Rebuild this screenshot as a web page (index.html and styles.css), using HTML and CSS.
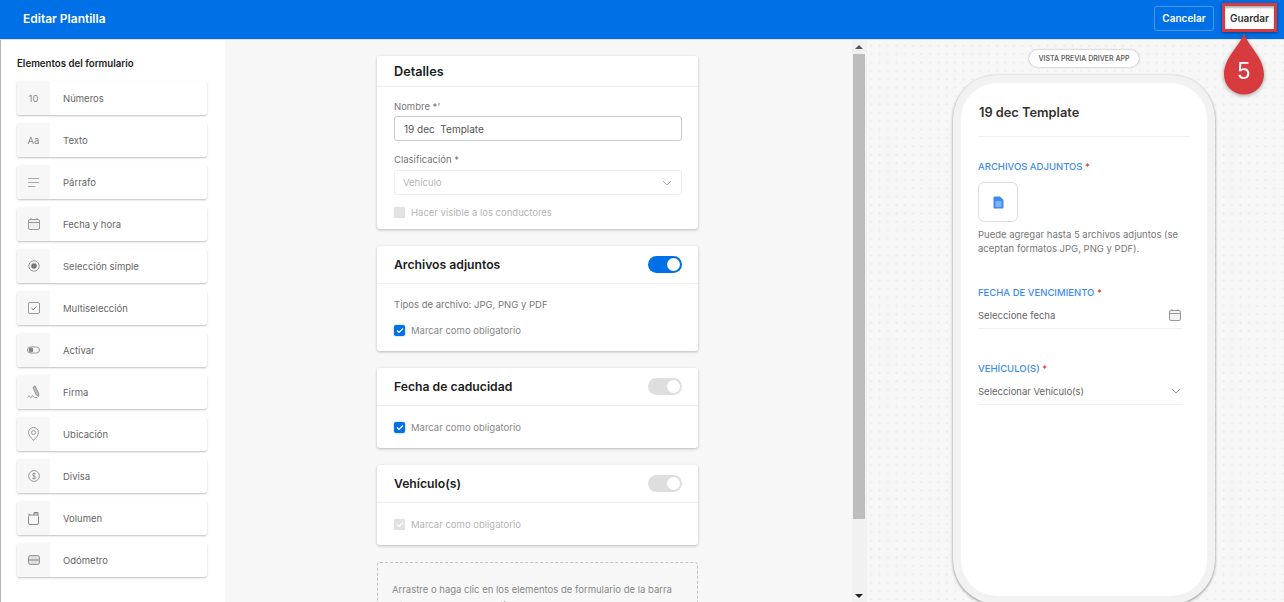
FILE: index.html
```html
<!DOCTYPE html>
<html lang="es">
<head>
	<title>Editar Plantilla</title>
	<meta charset="utf-8">
	<link rel="stylesheet" href="styles.css">
</head>
<body>
	<header class="topbar">
		<div class="topbar-title">Editar Plantilla</div>
		<div class="topbar-actions">
			<button class="btn-cancel">Cancelar</button>
			<button class="btn-save">Guardar</button>
		</div>
	</header>

	<div class="main">
		<aside class="sidebar">
			<div class="sidebar-title">Elementos del formulario</div>

			<div class="element"><div class="element-icon">10</div><div class="element-name">Números</div></div>
			<div class="element"><div class="element-icon">Aa</div><div class="element-name">Texto</div></div>
			<div class="element">
				<div class="element-icon"><svg width="11" height="9" viewBox="0 0 11 9"><path d="M0 .5h11M0 4.500h11M0 8.500h7.500" stroke="#aaa" fill="none"/></svg></div>
				<div class="element-name">Párrafo</div>
			</div>
			<div class="element">
				<div class="element-icon"><svg width="12" height="12" viewBox="0 0 12 12"><rect x="0.5" y="1.5" width="11" height="10" rx="1.5" fill="#eee" stroke="#999"/><path d="M1 4.500h10M3 0v2M9 0v2" stroke="#999" fill="none"/></svg></div>
				<div class="element-name">Fecha y hora</div>
			</div>
			<div class="element">
				<div class="element-icon"><svg width="12" height="12" viewBox="0 0 12 12"><circle cx="6" cy="6" r="5.2" fill="none" stroke="#999"/><circle cx="6" cy="6" r="2.8" fill="#777"/></svg></div>
				<div class="element-name">Selección simple</div>
			</div>
			<div class="element">
				<div class="element-icon"><svg width="12" height="12" viewBox="0 0 12 12"><rect x="0.5" y="0.5" width="11" height="11" rx="1.5" fill="none" stroke="#999"/><path d="M3.500 6.200l1.700 1.600 3.200-3.400" fill="none" stroke="#777"/></svg></div>
				<div class="element-name">Multiselección</div>
			</div>
			<div class="element">
				<div class="element-icon"><svg width="13" height="8" viewBox="0 0 13 8"><rect x="0.5" y="1" width="12" height="6" rx="3" fill="none" stroke="#999"/><circle cx="4" cy="4" r="2.400" fill="#888"/></svg></div>
				<div class="element-name">Activar</div>
			</div>
			<div class="element">
				<div class="element-icon"><svg width="13" height="14" viewBox="0 0 13 14"><path d="M6 2.500L8 .8l3.500 7.200.3 3.500-2.900-2z" fill="#bbb" stroke="#888" stroke-width="0.800"/><path d="M0.500 12.500c1-2 2-2 2.500-.5s1.500 1 2-1 1.500 1 2.500 1.500h3" fill="none" stroke="#999"/></svg></div>
				<div class="element-name">Firma</div>
			</div>
			<div class="element">
				<div class="element-icon"><svg width="11" height="14" viewBox="0 0 11 14"><path d="M5.500.5a5 5 0 0 1 5 5c0 3-3 5.500-5 8-2-2.500-5-5-5-8a5 5 0 0 1 5-5z" fill="none" stroke="#999"/><circle cx="5.500" cy="5.500" r="2" fill="none" stroke="#999"/></svg></div>
				<div class="element-name">Ubicación</div>
			</div>
			<div class="element">
				<div class="element-icon"><svg width="12" height="12" viewBox="0 0 12 12"><circle cx="6" cy="6" r="5.400" fill="none" stroke="#999"/><path d="M7.800 4.200C7.300 3.300 4.400 3 4.400 4.600S7.900 5.900 7.900 7.500 4.600 9 4.100 7.800M6 2.500v7" fill="none" stroke="#888" stroke-width="0.800"/></svg></div>
				<div class="element-name">Divisa</div>
			</div>
			<div class="element">
				<div class="element-icon"><svg width="11" height="13" viewBox="0 0 11 13"><rect x="0.500" y="3" width="10" height="9.500" rx="1.500" fill="none" stroke="#888"/><path d="M1 3V1.500M6 3V.5h4V3" fill="#bbb" stroke="#888"/></svg></div>
				<div class="element-name">Volumen</div>
			</div>
			<div class="element">
				<div class="element-icon"><svg width="12" height="10" viewBox="0 0 12 10"><rect x="0.500" y="0.500" width="11" height="9" rx="2" fill="#d8d8d8" stroke="#999"/><path d="M1 5h10" stroke="#888" fill="none"/><path d="M2 3h8M2 7h8" stroke="#f2f2f2" stroke-dasharray="2 1" fill="none"/></svg></div>
				<div class="element-name">Odómetro</div>
			</div>
		</aside>

		<section class="editor">
			<div class="editor-scroll">
				<div class="card">
					<div class="card-head card-head-details">Detalles</div>
					<div class="card-body details-body">
						<label class="field-label">Nombre *'</label>
						<div class="input input-active">19 dec&nbsp; Template</div>
						<label class="field-label field-label-next">Clasificación *</label>
						<div class="input input-disabled">
							Vehículo
							<svg width="10" height="6" viewBox="0 0 10 6"><path d="M1 1l4 4 4-4" fill="none" stroke="#aaa"/></svg>
						</div>
						<div class="check-row check-row-details"><span class="check check-off"></span><span class="check-text check-text-muted">Hacer visible a los conductores</span></div>
					</div>
				</div>

				<div class="card">
					<div class="card-head">Archivos adjuntos<span class="toggle toggle-on"></span></div>
					<div class="card-body">
						<div class="file-types">Tipos de archivo: JPG, PNG y PDF</div>
						<div class="check-row"><span class="check check-on"><svg width="8" height="7" viewBox="0 0 8 7"><path d="M1 3.500l2 2 4-4" fill="none" stroke="#fff" stroke-width="1.200"/></svg></span><span class="check-text">Marcar como obligatorio</span></div>
					</div>
				</div>

				<div class="card">
					<div class="card-head">Fecha de caducidad<span class="toggle"></span></div>
					<div class="card-body">
						<div class="check-row"><span class="check check-on"><svg width="8" height="7" viewBox="0 0 8 7"><path d="M1 3.500l2 2 4-4" fill="none" stroke="#fff" stroke-width="1.200"/></svg></span><span class="check-text">Marcar como obligatorio</span></div>
					</div>
				</div>

				<div class="card">
					<div class="card-head">Vehículo(s)<span class="toggle"></span></div>
					<div class="card-body">
						<div class="check-row"><span class="check check-off"><svg width="8" height="7" viewBox="0 0 8 7"><path d="M1 3.500l2 2 4-4" fill="none" stroke="#fff" stroke-width="1.200"/></svg></span><span class="check-text check-text-muted">Marcar como obligatorio</span></div>
					</div>
				</div>

				<div class="dropzone">Arrastre o haga clic en los elementos de formulario de la barra lateral para crear la plantilla</div>
			</div>
			<div class="scrollbar">
				<span class="arrow arrow-up"></span>
				<div class="scroll-thumb"></div>
				<span class="arrow arrow-down"></span>
			</div>
		</section>

		<section class="preview">
			<div class="preview-tag">VISTA PREVIA DRIVER APP</div>
			<div class="phone">
				<div class="phone-screen">
					<div class="phone-title">19 dec Template</div>

					<div class="phone-label phone-label-first">ARCHIVOS ADJUNTOS <span class="req">*</span></div>
					<div class="attach-box">
						<svg width="11" height="13" viewBox="0 0 11 13"><path d="M.5 1.500a1 1 0 0 1 1-1h5.500L10.500 4v7.500a1 1 0 0 1-1 1h-8a1 1 0 0 1-1-1z" fill="#3d8bf0"/><path d="M2.500 6h6M2.500 8h6M2.500 10h6" stroke="#cfe2fb" stroke-width="0.900"/></svg>
					</div>
					<div class="attach-help">Puede agregar hasta 5 archivos adjuntos (se aceptan formatos JPG, PNG y PDF).</div>

					<div class="phone-label phone-label-date">FECHA DE VENCIMIENTO <span class="req">*</span></div>
					<div class="phone-input">
						Seleccione fecha
						<svg width="12" height="12" viewBox="0 0 12 12"><rect x="0.500" y="1.500" width="11" height="10" rx="1.500" fill="#f2f2f2" stroke="#999"/><path d="M1 4.500h10M3 0v2M9 0v2" stroke="#999" fill="none"/></svg>
					</div>

					<div class="phone-label phone-label-vehicle">VEHÍCULO(S) <span class="req">*</span></div>
					<div class="phone-input">
						Seleccionar Vehículo(s)
						<svg width="10" height="6" viewBox="0 0 10 6"><path d="M1 1l4 4 4-4" fill="none" stroke="#999"/></svg>
					</div>
				</div>
			</div>
		</section>
	</div>

	<!-- callout on top of the screenshot -->
	<div class="callout-box"></div>
	<div class="callout-pin">
		<svg width="44" height="64" viewBox="0 0 44 64"><path d="M22 0C25 12 42 24 42 41.500A20 20 0 0 1 2 41.500C2 24 19 12 22 0z" fill="#d83b3e"/></svg>
		<span class="callout-num">5</span>
	</div>
</body>
</html>
```

FILE: styles.css
```css
* {
	box-sizing: border-box;
}

html, body {
	margin: 0;
	height: 100%;
	overflow: hidden;
	font-family: "Inter", "Liberation Sans", sans-serif;
	color: #1c1c1c;
	background-color: #f7f7f7;
}

body {
	display: flex;
	flex-direction: column;
}

.topbar {
	display: flex;
	flex: none;
	align-items: center;
	justify-content: space-between;
	height: 40px;
	padding: 0 7px 3px 23px;
	background-color: #0070e6;
	border-bottom: 1px solid #e6e0d8;
}

.topbar-title {
	font-size: 12px;
	font-weight: 600;
	color: #fff;
}

.topbar-actions {
	display: flex;
	align-items: center;
	gap: 11px;
}

button {
	font-family: inherit;
	font-size: 10px;
	font-weight: 600;
	border-radius: 3px;
}

.btn-cancel {
	width: 60px;
	height: 25px;
	padding: 0;
	color: #fff;
	background-color: transparent;
	border: 1px solid #4b98ee;
}

.btn-save {
	width: 49px;
	height: 25px;
	margin-right: 3px;
	padding: 0;
	color: #333;
	background-color: #fff;
	border: none;
	border-radius: 0;
}

.main {
	display: flex;
	flex: 1;
	min-height: 0;
}

.sidebar {
	flex: none;
	width: 225px;
	padding: 18px 18px 0 16px;
	background-color: #fff;
	border-left: 1px solid #b5b5b5;
}

.sidebar-title {
	margin-bottom: 11px;
	font-size: 9.7px;
	font-weight: 600;
	line-height: 12px;
}

.element {
	display: flex;
	align-items: stretch;
	height: 34px;
	margin-bottom: 8px;
	background-color: #fff;
	border-radius: 3px;
	box-shadow: 0 1px 2px rgba(0,0,0,0.25);
	font-size: 9.5px;
	color: #666;
	overflow: hidden;
}

.element-icon {
	display: flex;
	flex: none;
	align-items: center;
	justify-content: center;
	width: 33px;
	background-color: #f7f7f7;
	color: #888;
}

.element-name {
	display: flex;
	align-items: center;
	padding-left: 13px;
}

.editor {
	display: flex;
	flex: none;
	width: 642px;
}

.editor-scroll {
	flex: 1;
	padding: 16px 0 0 152px;
	overflow: hidden;
}

.card {
	width: 321px;
	margin-bottom: 17px;
	background-color: #fff;
	border-radius: 3px;
	box-shadow: 0 1px 3px rgba(0,0,0,0.25);
}

.card-head {
	display: flex;
	align-items: center;
	justify-content: space-between;
	height: 38px;
	padding: 0 16px 0 17px;
	font-size: 12.2px;
	font-weight: 600;
	border-bottom: 1px solid #eee;
}

.card-head-details {
	height: 31px;
	font-size: 12.7px;
}

.card-body {
	padding: 15px 16px 15px 17px;
}

.details-body {
	padding-top: 14px;
	padding-bottom: 11px;
}

.field-label {
	display: block;
	font-size: 9.5px;
	line-height: 12px;
	color: #777;
}

.field-label-next {
	margin-top: 13px;
}

.input {
	display: flex;
	align-items: center;
	justify-content: space-between;
	height: 25px;
	margin-top: 4px;
	padding: 0 9px;
	font-size: 9.5px;
	border-radius: 3px;
}

.input-active {
	margin-top: 3px;
	font-size: 10px;
	color: #555;
	border: 1px solid #ccc;
}

.input-disabled {
	padding-left: 8px;
	color: #b5b5b5;
	border: 1px solid #eee;
}

.check-row {
	display: flex;
	align-items: center;
	gap: 6px;
	height: 12px;
}

.check-row-details {
	margin-top: 11px;
}

.check {
	display: flex;
	flex: none;
	align-items: center;
	justify-content: center;
	width: 11px;
	height: 11px;
	border-radius: 2px;
}

.check-on {
	background-color: #0070e6;
	box-shadow: 0 0 2px rgba(0,112,230,0.5);
}

.check-off {
	background-color: #e2e2e2;
	box-shadow: 0 0 1px rgba(0,0,0,0.2);
}

.check-text {
	font-size: 9.5px;
	color: #888;
}

.check-text-muted {
	color: #b5b5b5;
}

.file-types {
	margin-bottom: 13px;
	font-size: 9.5px;
	line-height: 12px;
	color: #777;
}

.toggle {
	position: relative;
	width: 34px;
	height: 17px;
	background-color: #dedede;
	border-radius: 9px;
}

.toggle::after {
	content: "";
	position: absolute;
	top: 2px;
	right: 2px;
	width: 13px;
	height: 13px;
	background-color: #fff;
	border-radius: 50%;
}

.toggle-on {
	background-color: #0070e6;
}

.dropzone {
	width: 321px;
	height: 80px;
	padding: 19px 14px 0;
	font-size: 9.5px;
	line-height: 16px;
	color: #888;
	border: 1px dashed #c4c4c4;
	border-radius: 3px;
}

.scrollbar {
	position: relative;
	flex: none;
	width: 15px;
	background-color: #f1f1f1;
}

.scroll-thumb {
	width: 12px;
	height: 465px;
	margin: 14px 1px 0;
	background-color: #bdbdbd;
}

.arrow {
	position: absolute;
	left: 3px;
	width: 0;
	height: 0;
	border-left: 4px solid transparent;
	border-right: 4px solid transparent;
}

.arrow-up {
	top: 5px;
	border-bottom: 4px solid #555;
}

.arrow-down {
	bottom: 4px;
	border-top: 4px solid #222;
}

.preview {
	display: flex;
	flex: 1;
	flex-direction: column;
	align-items: center;
	padding: 10px 0 0 17px;
	background-color: #f7f7f7;
	background-image: radial-gradient(circle, #ebebeb 0.9px, transparent 1.1px);
	background-position: 0 1.5px;
	background-size: 8.4px 8.4px;
	overflow: hidden;
}

.preview-tag {
	flex: none;
	width: 110px;
	height: 17px;
	font-size: 7px;
	font-weight: 600;
	line-height: 17px;
	text-align: center;
	color: #666;
	background-color: #fff;
	border-radius: 9px;
	box-shadow: 0 0 2px rgba(0,0,0,0.4);
}

.phone {
	flex: none;
	width: 262px;
	height: 529px;
	margin-top: 8px;
	padding: 8px;
	background-color: #f2f2f2;
	border-radius: 44px;
	box-shadow: 0 1px 3px rgba(0,0,0,0.45);
}

.phone-screen {
	height: 100%;
	padding: 22px 24px 0 17px;
	background-color: #fff;
	border-radius: 36px;
}

.phone-title {
	height: 32px;
	margin-right: -7px;
	padding-left: 1px;
	font-size: 12.8px;
	font-weight: 600;
	line-height: 16px;
	color: #333;
	border-bottom: 1px solid #eee;
}

.phone-label {
	font-size: 9.5px;
	font-weight: 500;
	line-height: 12px;
	color: #3d8bf0;
}

.req {
	color: #e53935;
}

.phone-label-first {
	margin-top: 24px;
}

.attach-box {
	display: flex;
	align-items: center;
	justify-content: center;
	width: 40px;
	height: 40px;
	margin-top: 9px;
	border: 1px solid #ddd;
	border-radius: 6px;
}

.attach-help {
	margin-top: 6px;
	font-size: 9.5px;
	line-height: 14px;
	color: #777;
}

.phone-label-date {
	margin-top: 31px;
}

.phone-label-vehicle {
	margin-top: 34px;
}

.phone-input {
	display: flex;
	align-items: center;
	justify-content: space-between;
	height: 27px;
	margin-top: 3px;
	padding-right: 2px;
	font-size: 9.5px;
	color: #666;
	border-bottom: 1px solid #eee;
}

.callout-box {
	position: absolute;
	left: 1222px;
	top: 3px;
	width: 55px;
	height: 29px;
	border: 3px solid #d83b3e;
	box-shadow: 0 1px 3px rgba(0,0,0,0.4), inset 0 2px 2px rgba(0,0,0,0.3);
}

.callout-pin {
	position: absolute;
	left: 1222px;
	top: 33px;
	width: 44px;
	height: 64px;
	filter: drop-shadow(0 1px 2px rgba(0,0,0,0.35));
}

.callout-num {
	position: absolute;
	left: 0;
	right: 0;
	top: 24px;
	font-family: "Liberation Sans", sans-serif;
	font-size: 23px;
	line-height: 28px;
	text-align: center;
	color: #fff;
}
```
